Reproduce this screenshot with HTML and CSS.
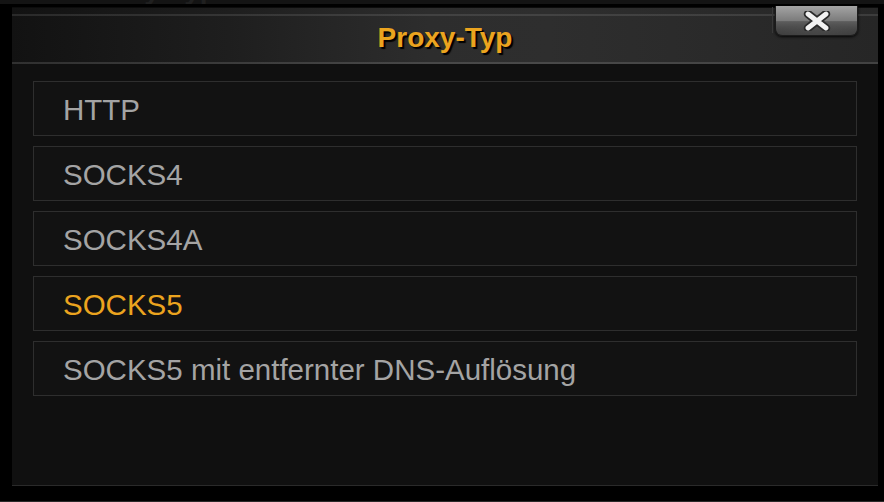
FILE: index.html
```html
<!DOCTYPE html>
<html lang="de">
<head>
<meta charset="utf-8">
<title>Proxy-Typ</title>
<link rel="stylesheet" href="styles.css">
</head>
<body>
<div class="screen">
  <div class="backstrip"><span class="ghost">Proxy-Typ</span></div>
  <div class="dialog">
    <div class="header">
      <h1 class="title">Proxy-Typ</h1>
      <div class="sep"></div>
      <button class="close" aria-label="Schließen">
        <svg width="28" height="20" viewBox="0 0 28 20">
          <path d="M5 3 L23 17 M23 3 L5 17" stroke="#2a2a2a" stroke-width="8.5" stroke-linecap="round" fill="none"/>
          <path d="M5 3 L23 17 M23 3 L5 17" stroke="#f2f2f2" stroke-width="4.8" stroke-linecap="round" fill="none"/>
        </svg>
      </button>
    </div>
    <ul class="list">
      <li class="item">HTTP</li>
      <li class="item">SOCKS4</li>
      <li class="item">SOCKS4A</li>
      <li class="item selected">SOCKS5</li>
      <li class="item">SOCKS5 mit entfernter DNS-Auflösung</li>
    </ul>
  </div>
  <div class="bottomline"></div>
</div>
</body>
</html>
```

FILE: styles.css
```css
html, body {
  margin: 0;
  padding: 0;
  background: #000;
}
.screen {
  width: 884px;
  height: 502px;
  overflow: hidden;
  position: relative;
  display: flex;
  flex-direction: column;
  font-family: "Liberation Sans", Arial, sans-serif;
}
.backstrip {
  height: 4px;
  background: #141414;
  margin-bottom: 3px;
  overflow: hidden;
  padding-left: 82px;
}
.ghost {
  display: block;
  font-size: 28px;
  line-height: 28px;
  font-weight: bold;
  color: #202020;
  margin-top: -24px;
}
.dialog {
  margin: 0 6px 0 12px;
  height: 479px;
  background: #101010;
  border-bottom: 1px solid #2a2a2a;
  box-sizing: border-box;
  display: flex;
  flex-direction: column;
}
.header {
  position: relative;
  height: 57px;
  flex: none;
  display: flex;
  align-items: center;
  justify-content: center;
  background:
    linear-gradient(to bottom,
      #0c0c0c 0px, #0c0c0c 1px,
      transparent 1px, transparent 7px,
      rgba(255,255,255,0.10) 7px, rgba(255,255,255,0.10) 9px,
      transparent 9px, transparent 55px,
      rgba(255,255,255,0.13) 55px, rgba(255,255,255,0.13) 57px),
    linear-gradient(to right, #121212 0%, #1e1e1e 25%, #2d2d2d 48%, #2e2e2e 62%, #262626 100%);
}
.title {
  margin: 4px 0 0 0;
  font-size: 28px;
  font-weight: bold;
  color: #eba41f;
  text-shadow: 2px 2px 1px #000;
  letter-spacing: 0;
}
.sep {
  position: absolute;
  left: 760px;
  top: 0;
  width: 1px;
  height: 26px;
  background: #3a3a3a;
}
.close {
  position: absolute;
  right: 20px;
  top: -1px;
  width: 83px;
  height: 30px;
  padding: 0;
  border: 1px solid #1c1c1c;
  border-top: none;
  border-radius: 0 0 7px 7px;
  background:
    radial-gradient(ellipse 70% 40% at 50% 105%, rgba(255,255,255,0.06), transparent),
    linear-gradient(to bottom, #a4a4a4 0%, #7c7c7c 50%, #5c5c5c 54%, #464646 80%, #3a3a3a 100%);
  box-shadow: 0 1px 3px rgba(0,0,0,0.9);
  display: flex;
  align-items: center;
  justify-content: center;
}
.close svg {
  display: block;
}
.list {
  list-style: none;
  margin: 17px 21px 0 21px;
  padding: 0;
  display: flex;
  flex-direction: column;
  gap: 10px;
}
.item {
  height: 55px;
  box-sizing: border-box;
  border: 1px solid #2e2e2e;
  background: #121212;
  padding-left: 29px;
  display: flex;
  align-items: center;
  font-size: 29.5px;
  color: #a4a4a4;
  padding-top: 2px;
}
.item.selected {
  color: #eba41f;
}
.bottomline {
  margin-top: auto;
  height: 1px;
  background: #2a2a2a;
}
```
